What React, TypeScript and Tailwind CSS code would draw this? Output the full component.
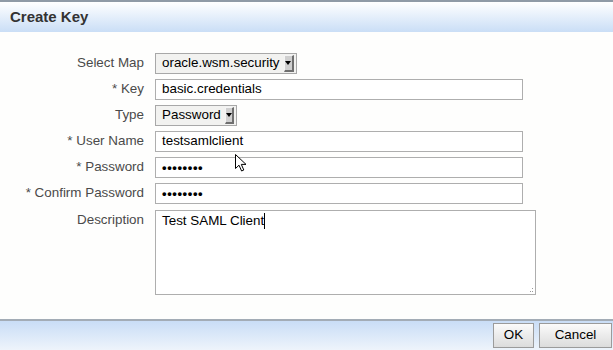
import React from "react";

function Arrow() {
  return (
    <span className="ml-auto mr-[1px] flex h-[17px] w-[12px] items-center justify-center border-l border-t border-l-[#f4f4f4] border-t-[#f4f4f4] border-r-2 border-b-2 border-r-[#6f6f6f] border-b-[#6f6f6f] bg-[#cfcfcf]">
      <svg width="6" height="4" viewBox="0 0 6 4">
        <path d="M0 0 H6 L3 4 Z" fill="#000" />
      </svg>
    </span>
  );
}

function Select({ value, width }: { value: string; width: string }) {
  return (
    <div className={`flex h-[21px] items-center border border-[#a8a8a8] bg-[#f2f2f0] pl-[6px] pr-[1px] text-[13.4px] text-black ${width}`}>
      <span className="mr-[4px]">{value}</span>
      <Arrow />
    </div>
  );
}

function Input({ children }: { children: React.ReactNode }) {
  return (
    <div className="flex h-[21px] w-[368px] items-center border border-[#aeaeae] bg-white pl-[6px] text-[13.4px] text-black">
      {children}
    </div>
  );
}

function Label({ children, req }: { children: React.ReactNode; req?: boolean }) {
  return (
    <div className="pt-[2px] text-right text-[13.4px] leading-[16px] text-[#4a4a4a]">
      {req ? "* " : ""}
      {children}
    </div>
  );
}

const Dots = () => <span className="text-[13px] font-bold tracking-[0.6px]">••••••••</span>;

export default function App() {
  return (
    <div
      className="relative flex h-[350px] w-[613px] flex-col overflow-hidden bg-[#fefefd]"
      style={{ fontFamily: '"Liberation Sans", Arial, sans-serif' }}
    >
      <div className="flex h-[32px] items-center border-t-2 border-t-[#8f9aa6] bg-gradient-to-b from-[#ffffff] to-[#cadef6] pl-[10px]">
        <span className="text-[15px] font-bold text-[#333]">Create Key</span>
      </div>

      <div className="flex-1 pt-[21px]">
        <div className="grid grid-cols-[144px_auto] gap-x-[11px] gap-y-[5px]">
          <Label>Select Map</Label>
          <Select value="oracle.wsm.security" width="w-[142px]" />

          <Label req>Key</Label>
          <Input>basic.credentials</Input>

          <Label>Type</Label>
          <Select value="Password" width="w-[82px]" />

          <Label req>User Name</Label>
          <Input>testsamlclient</Input>

          <Label req>Password</Label>
          <Input>
            <Dots />
          </Input>

          <Label req>Confirm Password</Label>
          <Input>
            <Dots />
          </Input>

          <div className="pt-[1px]">
            <Label>Description</Label>
          </div>
          <div className="relative mt-[1px] h-[85px] w-[381px] border border-[#aeaeae] bg-white pl-[6px] pt-[2px] text-[13.4px] leading-[16px] text-black">
            <span>Test SAML Client</span>
            <span className="inline-block h-[16px] w-[1px] bg-black align-top" />
            <svg className="absolute bottom-[1px] right-[1px]" width="5" height="5" viewBox="0 0 5 5">
              <rect x="3" y="0" width="1" height="1" fill="#999" />
              <rect x="1" y="3" width="1" height="1" fill="#999" />
              <rect x="3" y="3" width="1" height="1" fill="#999" />
            </svg>
          </div>
        </div>
      </div>

      <div className="flex h-[31px] items-center justify-end gap-[5px] border-t-2 border-t-[#a3acb6] bg-gradient-to-b from-[#c9ddf6] to-[#eef4fb] pr-[1px]">
        <button className="h-[25px] w-[41px] border border-[#9b9b9b] bg-gradient-to-b from-[#fbfbfb] to-[#dcdcdc] text-[13.4px] text-black">
          OK
        </button>
        <button className="h-[25px] w-[73px] border border-[#9b9b9b] bg-gradient-to-b from-[#fbfbfb] to-[#dcdcdc] text-[13.4px] text-black">
          Cancel
        </button>
      </div>

      <svg className="absolute left-[234px] top-[153px]" width="14" height="20" viewBox="0 0 14 20">
        <path
          d="M1.5 1.5 L1.5 15.5 L5 12.2 L7.6 18 L9.8 17 L7.3 11.4 L12 11.4 Z"
          fill="#fff"
          stroke="#000"
          strokeWidth="1"
          strokeLinejoin="miter"
        />
      </svg>
    </div>
  );
}
